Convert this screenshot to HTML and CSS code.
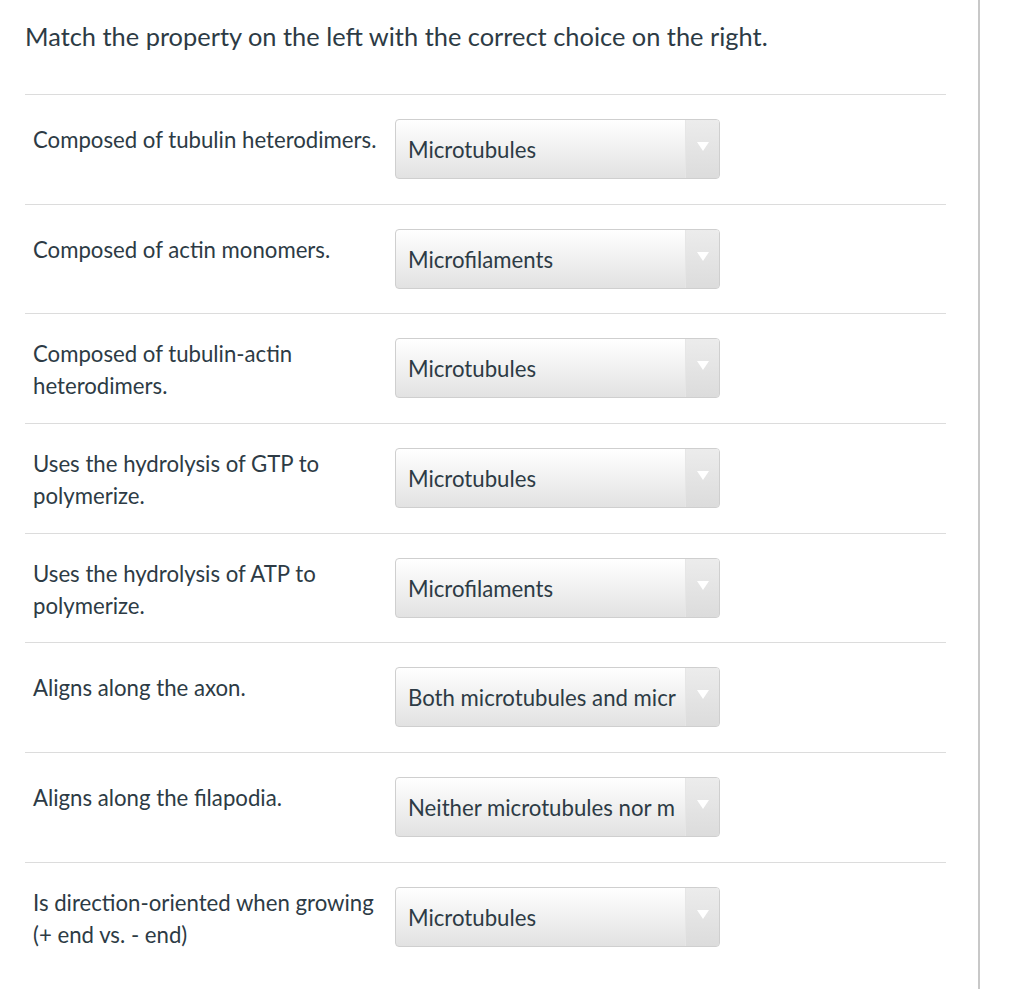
FILE: index.html
```html
<!DOCTYPE html>
<html>
<head>
<meta charset="utf-8">
<link rel="stylesheet" href="styles.css">
</head>
<body>
<div class="page">
  <main class="quiz">
    <h1 class="title">Match the property on the left with the correct choice on the right.</h1>
    <div class="rows">
      <div class="row"><div class="label"><span>Composed of tubulin heterodimers.</span></div><div class="select"><span class="value">Microtubules</span><span class="arrow"></span></div></div>
      <div class="row"><div class="label"><span>Composed of actin monomers.</span></div><div class="select"><span class="value">Microfilaments</span><span class="arrow"></span></div></div>
      <div class="row"><div class="label"><span>Composed of tubulin-actin heterodimers.</span></div><div class="select"><span class="value">Microtubules</span><span class="arrow"></span></div></div>
      <div class="row"><div class="label"><span>Uses the hydrolysis of GTP to polymerize.</span></div><div class="select"><span class="value">Microtubules</span><span class="arrow"></span></div></div>
      <div class="row"><div class="label"><span>Uses the hydrolysis of ATP to polymerize.</span></div><div class="select"><span class="value">Microfilaments</span><span class="arrow"></span></div></div>
      <div class="row"><div class="label"><span>Aligns along the axon.</span></div><div class="select"><span class="value">Both microtubules and micr</span><span class="arrow"></span></div></div>
      <div class="row"><div class="label"><span>Aligns along the filapodia.</span></div><div class="select"><span class="value">Neither microtubules nor m</span><span class="arrow"></span></div></div>
      <div class="row"><div class="label"><span>Is direction-oriented when growing (+ end vs. - end)</span></div><div class="select"><span class="value">Microtubules</span><span class="arrow"></span></div></div>
    </div>
  </main>
  <aside class="side"></aside>
</div>
</body>
</html>
```
FILE: styles.css
```css
html, body {
  margin: 0;
  padding: 0;
  background: #fff;
}
body {
  font-family: Lato, "Open Sans", sans-serif;
  color: #2d3b45;
}
.page {
  display: flex;
  height: 989px;
  overflow: hidden;
}
.quiz {
  width: 921px;
  padding-left: 25px;
  flex: none;
}
.side {
  margin-left: 32px;
  width: 2px;
  background: #c8c8c8;
  flex: none;
}
.title {
  margin: 0;
  padding-top: 20px;
  height: 95px;
  box-sizing: border-box;
  font-size: 25.4px;
  font-weight: 400;
  line-height: 32px;
  border-bottom: 1px solid #dcdcdc;
}
.rows {
  display: flex;
  flex-direction: column;
}
.row {
  display: flex;
  align-items: flex-start;
  height: 109.7px;
  box-sizing: border-box;
  border-bottom: 1px solid #dcdcdc;
}
.row:last-child {
  border-bottom: none;
}
.label {
  width: 352px;
  flex: none;
  margin-top: 24px;
  min-height: 42px;
  padding-left: 8px;
  display: flex;
  align-items: center;
  font-size: 22.2px;
  line-height: 32px;
}
.select {
  margin-left: 10px;
  margin-top: 24px;
  width: 325px;
  height: 60px;
  flex: none;
  box-sizing: border-box;
  border: 1px solid #cfcfcf;
  border-radius: 4px;
  background: linear-gradient(#ffffff, #e2e2e2);
  display: flex;
  align-items: center;
  overflow: hidden;
}
.value {
  flex: 1;
  padding-left: 12px;
  font-size: 22.2px;
  line-height: 26px;
  padding-top: 2px;
  white-space: nowrap;
  overflow: hidden;
  color: #2d3b45;
}
.arrow {
  width: 33px;
  height: 100%;
  flex: none;
  border-left: 1px solid #e6e6e6;
  background: linear-gradient(#ececec, #dcdcdc);
  position: relative;
}
.arrow::after {
  content: "";
  position: absolute;
  left: 11px;
  top: 22px;
  border-left: 6px solid transparent;
  border-right: 6px solid transparent;
  border-top: 9px solid #fff;
}
```
